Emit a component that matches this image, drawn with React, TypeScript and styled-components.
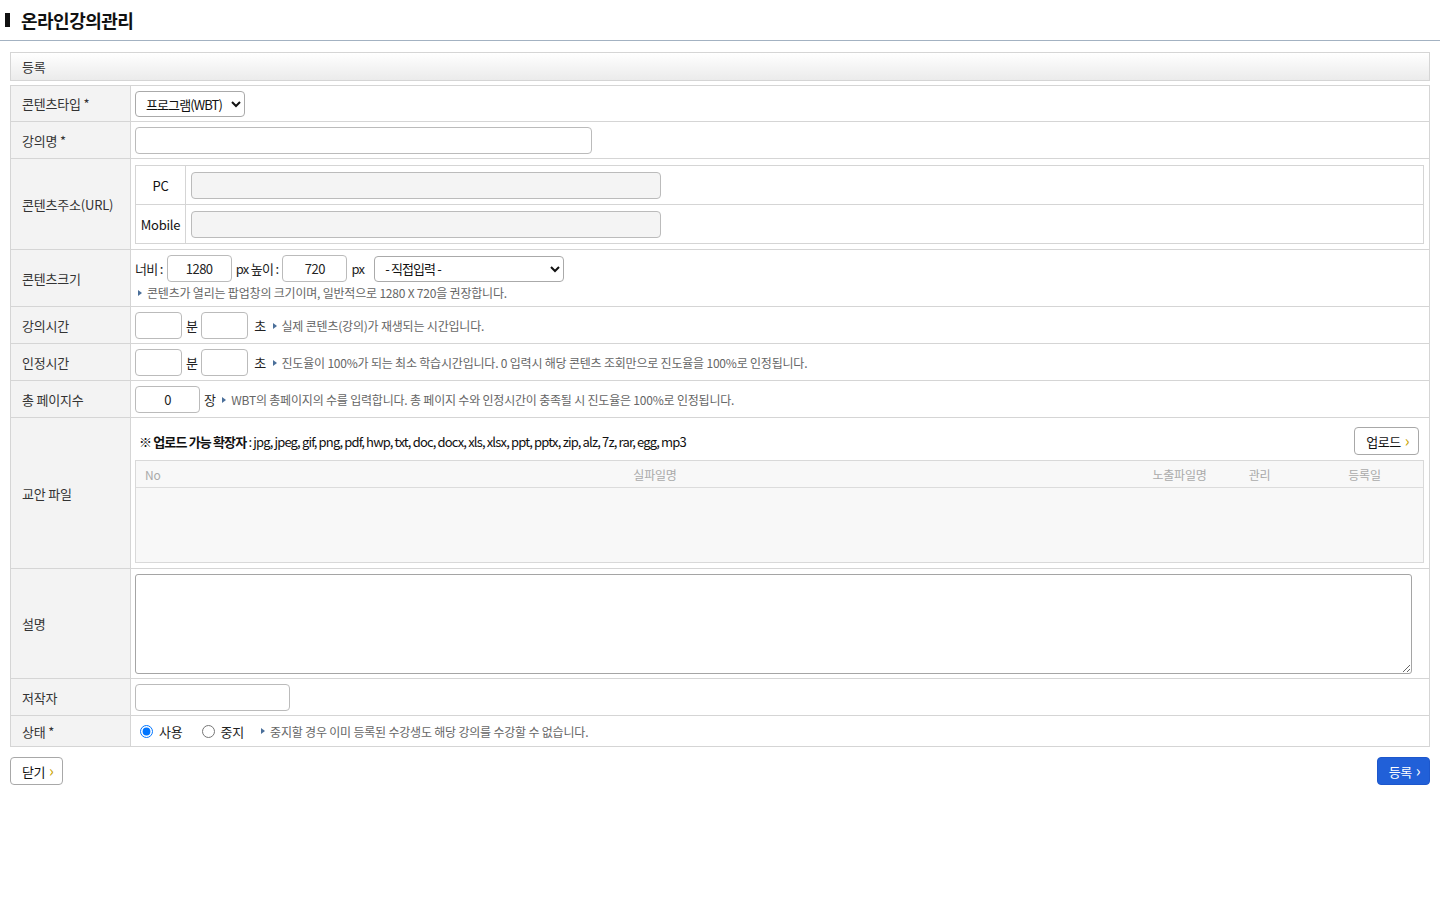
import styled, { createGlobalStyle } from 'styled-components'

const GlobalStyle = createGlobalStyle`
  body {
    margin: 0;
    background: #fff;
    font-family: "Noto Sans CJK KR", "Noto Sans", sans-serif;
    font-size: 13px;
    color: #333;
    letter-spacing: -0.2px;
  }
  input, select, textarea, button {
    font-family: "Noto Sans CJK KR", "Noto Sans", sans-serif;
    letter-spacing: -0.5px;
  }
`;

const TitleBar = styled.h1`
  margin: 0;
  height: 40px;
  border-bottom: 1px solid #a3b2c2;
  display: flex;
  align-items: center;
  padding-left: 5px;
  font-size: 18px;
  font-weight: 700;
  color: #111;
  letter-spacing: -0.5px;
  &::before {
    content: '';
    width: 5px;
    height: 14px;
    background: #111;
    margin-right: 11px;
  }
`;

const Wrapper = styled.div`
  padding: 11px 10px 0;
`;

const SectionHead = styled.div`
  height: 27px;
  border: 1px solid #d5d5d5;
  background: linear-gradient(to bottom, #ffffff, #ebebeb);
  display: flex;
  align-items: center;
  padding-left: 11px;
  color: #333;
`;

const FormTable = styled.table`
  width: 100%;
  margin-top: 4px;
  border-collapse: collapse;
  border: 1px solid #d5d5d5;
`;

const Th = styled.th`
  width: 108px;
  background: #f3f3f3;
  border: 1px solid #d5d5d5;
  text-align: left;
  font-weight: 400;
  padding: 0 0 0 11px;
  color: #333;
`;

const Td = styled.td<{ $pad?: string }>`
  border: 1px solid #d5d5d5;
  padding: ${p => p.$pad || '5px 5px 4px 4px'};
  vertical-align: middle;
`;

const Line = styled.div`
  display: flex;
  align-items: center;
  gap: 4px;
  color: #222;
`;

const Field = styled.input<{ $w: number; $center?: boolean; $gray?: boolean }>`
  box-sizing: border-box;
  width: ${p => p.$w}px;
  height: 27px;
  border: 1px solid #bbb;
  border-radius: 4px;
  background: ${p => (p.$gray ? '#f4f4f4' : '#fff')};
  font-size: 13px;
  text-align: ${p => (p.$center ? 'center' : 'left')};
  color: #222;
  padding: 0 6px;
  margin: 0;
  outline: none;
`;

const Select = styled.select<{ $w: number }>`
  box-sizing: border-box;
  width: ${p => p.$w}px;
  height: 26px;
  border: 1px solid #aaa;
  border-radius: 4px;
  background: #fff;
  font-size: 13px;
  letter-spacing: -0.9px;
  color: #111;
  padding: 0 2px 0 6px;
  margin: 0;
`;

const Desc = styled.span`
  color: #666;
  font-size: 12px;
  letter-spacing: -0.2px;
  display: inline-flex;
  align-items: center;
  margin-left: 3px;
  &::before {
    content: '';
    border-left: 4px solid #4a6f9a;
    border-top: 3px solid transparent;
    border-bottom: 3px solid transparent;
    margin-right: 5px;
  }
`;

const DescLine = styled.div`
  margin-top: 0;
  line-height: 18px;
`;

const Unit = styled.span`
  color: #222;
  letter-spacing: -0.7px;
`;

const SubTable = styled.table`
  width: 100%;
  border-collapse: collapse;
  border: 1px solid #d5d5d5;
`;

const SubTh = styled.th`
  width: 49px;
  border: 1px solid #d5d5d5;
  font-weight: 400;
  color: #111;
  height: 38px;
  padding: 0;
  text-align: center;
`;

const SubTd = styled.td`
  border: 1px solid #d5d5d5;
  padding: 0 5px;
`;

const FileTop = styled.div`
  display: flex;
  align-items: center;
  justify-content: space-between;
  padding: 4px 0 5px 4px;
  color: #111;
  letter-spacing: -0.85px;
`;

const Strong = styled.b`
  font-weight: 700;
`;

const SmallBtn = styled.button<{ $primary?: boolean }>`
  height: 28px;
  padding: 0 9px 0 11px;
  border: 1px solid ${p => (p.$primary ? '#1d57cc' : '#a8a8a8')};
  border-radius: 4px;
  background: ${p => (p.$primary ? '#2160d8' : '#fff')};
  color: ${p => (p.$primary ? '#fff' : '#111')};
  font-size: 13px;
  display: inline-flex;
  align-items: center;
  gap: 4px;
  cursor: pointer;
  &::after {
    content: '›';
    font-size: 16px;
    line-height: 1;
    margin-top: -2px;
    color: ${p => (p.$primary ? '#fff' : '#c9a400')};
  }
`;

const FileGrid = styled.div`
  border: 1px solid #d9d9d9;
  background: #f8f8f8;
`;

const FileHead = styled.div`
  display: grid;
  grid-template-columns: 28px 1fr 67px 93px 117px;
  height: 26px;
  align-items: center;
  border-bottom: 1px solid #dcdcdc;
  color: #aaa;
  font-size: 12px;
`;

const HeadCell = styled.span<{ $left?: boolean }>`
  text-align: ${p => (p.$left ? 'left' : 'center')};
  padding-left: ${p => (p.$left ? '9px' : '0')};
`;

const FileBody = styled.div`
  height: 74px;
`;

const TextArea = styled.textarea`
  box-sizing: border-box;
  width: 1277px;
  height: 100px;
  border: 1px solid #a5a5a5;
  border-radius: 3px;
  display: block;
  margin: 0;
  resize: vertical;
`;

const RadioLabel = styled.label`
  display: inline-flex;
  align-items: center;
  gap: 6px;
  margin-right: 10px;
  color: #222;
  font-size: 13px;
  input {
    margin: 0 0 0 5px;
    width: 13px;
    height: 13px;
  }
`;

const Footer = styled.div`
  display: flex;
  justify-content: space-between;
  margin-top: 10px;
`;

const fileCols = ['실파일명', '노출파일명', '관리', '등록일'];

export default function App() {
  return (
    <>
      <GlobalStyle />
      <TitleBar>온라인강의관리</TitleBar>
      <Wrapper>
        <SectionHead>등록</SectionHead>
        <FormTable>
          <tbody>
            <tr>
              <Th>콘텐츠타입 *</Th>
              <Td>
                <Select $w={110} defaultValue="wbt">
                  <option value="wbt">프로그램(WBT)</option>
                </Select>
              </Td>
            </tr>
            <tr>
              <Th>강의명 *</Th>
              <Td>
                <Field $w={457} />
              </Td>
            </tr>
            <tr>
              <Th>콘텐츠주소(URL)</Th>
              <Td $pad="6px 5px 5px 4px">
                <SubTable>
                  <tbody>
                    <tr>
                      <SubTh>PC</SubTh>
                      <SubTd>
                        <Field $w={470} $gray />
                      </SubTd>
                    </tr>
                    <tr>
                      <SubTh>Mobile</SubTh>
                      <SubTd>
                        <Field $w={470} $gray />
                      </SubTd>
                    </tr>
                  </tbody>
                </SubTable>
              </Td>
            </tr>
            <tr>
              <Th>콘텐츠크기</Th>
              <Td>
                <Line>
                  <Unit>너비 :</Unit>
                  <Field $w={65} $center defaultValue="1280" />
                  <Unit>px 높이 :</Unit>
                  <Field $w={65} $center defaultValue="720" />
                  <Unit>px</Unit>
                  <Select $w={190} defaultValue="d" style={{ marginLeft: 6 }}>
                    <option value="d">- 직접입력 -</option>
                  </Select>
                </Line>
                <DescLine>
                  <Desc>콘텐츠가 열리는 팝업창의 크기이며, 일반적으로 1280 X 720을 권장합니다.</Desc>
                </DescLine>
              </Td>
            </tr>
            <tr>
              <Th>강의시간</Th>
              <Td>
                <Line>
                  <Field $w={47} $center />
                  <Unit>분</Unit>
                  <Field $w={47} $center />
                  <Unit style={{ marginLeft: 2 }}>초</Unit>
                  <Desc>실제 콘텐츠(강의)가 재생되는 시간입니다.</Desc>
                </Line>
              </Td>
            </tr>
            <tr>
              <Th>인정시간</Th>
              <Td>
                <Line>
                  <Field $w={47} $center />
                  <Unit>분</Unit>
                  <Field $w={47} $center />
                  <Unit style={{ marginLeft: 2 }}>초</Unit>
                  <Desc>진도율이 100%가 되는 최소 학습시간입니다. 0 입력시 해당 콘텐츠 조회만으로 진도율을 100%로 인정됩니다.</Desc>
                </Line>
              </Td>
            </tr>
            <tr>
              <Th>총 페이지수</Th>
              <Td>
                <Line>
                  <Field $w={65} $center defaultValue="0" />
                  <Unit>장</Unit>
                  <Desc>WBT의 총페이지의 수를 입력합니다. 총 페이지 수와 인정시간이 충족될 시 진도율은 100%로 인정됩니다.</Desc>
                </Line>
              </Td>
            </tr>
            <tr>
              <Th>교안 파일</Th>
              <Td $pad="5px 5px 5px 4px">
                <FileTop>
                  <span>
                    <Strong>※ 업로드 가능 확장자</Strong> : jpg, jpeg, gif, png, pdf, hwp, txt, doc, docx, xls, xlsx, ppt, pptx, zip, alz, 7z, rar, egg, mp3
                  </span>
                  <SmallBtn style={{ marginRight: 5 }}>업로드</SmallBtn>
                </FileTop>
                <FileGrid>
                  <FileHead>
                    <HeadCell $left>No</HeadCell>
                    {fileCols.map(c => (
                      <HeadCell key={c}>{c}</HeadCell>
                    ))}
                  </FileHead>
                  <FileBody />
                </FileGrid>
              </Td>
            </tr>
            <tr>
              <Th>설명</Th>
              <Td>
                <TextArea />
              </Td>
            </tr>
            <tr>
              <Th>저작자</Th>
              <Td>
                <Field $w={155} />
              </Td>
            </tr>
            <tr>
              <Th style={{ height: 30 }}>상태 *</Th>
              <Td $pad="0 5px 0 4px">
                <Line>
                  <RadioLabel>
                    <input type="radio" name="state" defaultChecked />
                    사용
                  </RadioLabel>
                  <RadioLabel>
                    <input type="radio" name="state" />
                    중지
                  </RadioLabel>
                  <Desc>중지할 경우 이미 등록된 수강생도 해당 강의를 수강할 수 없습니다.</Desc>
                </Line>
              </Td>
            </tr>
          </tbody>
        </FormTable>
        <Footer>
          <SmallBtn>닫기</SmallBtn>
          <SmallBtn $primary>등록</SmallBtn>
        </Footer>
      </Wrapper>
    </>
  );
}
